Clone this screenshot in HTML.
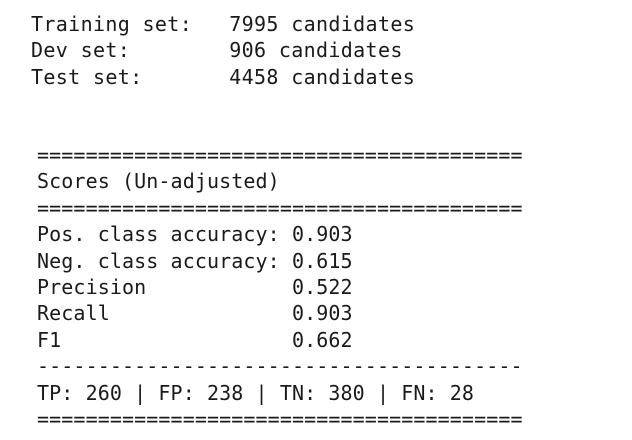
<!DOCTYPE html>
<html><head><style>
html,body{margin:0;padding:0;background:#fff;width:632px;height:440px;overflow:hidden}
pre{position:absolute;margin:0;font-family:"DejaVu Sans Mono","Liberation Mono",monospace;font-size:20px;line-height:26.4px;color:#1a1a1a;letter-spacing:0.1px}
</style></head><body>
<pre style="left:31px;top:11px;letter-spacing:0.35px">Training set:   7995 candidates
Dev set:        906 candidates
Test set:       4458 candidates</pre>
<pre style="left:37px;top:142px">========================================
Scores (Un-adjusted)
========================================
Pos. class accuracy: 0.903
Neg. class accuracy: 0.615
Precision            0.522
Recall               0.903
F1                   0.662
----------------------------------------
TP: 260 | FP: 238 | TN: 380 | FN: 28
========================================</pre>
</body></html>
